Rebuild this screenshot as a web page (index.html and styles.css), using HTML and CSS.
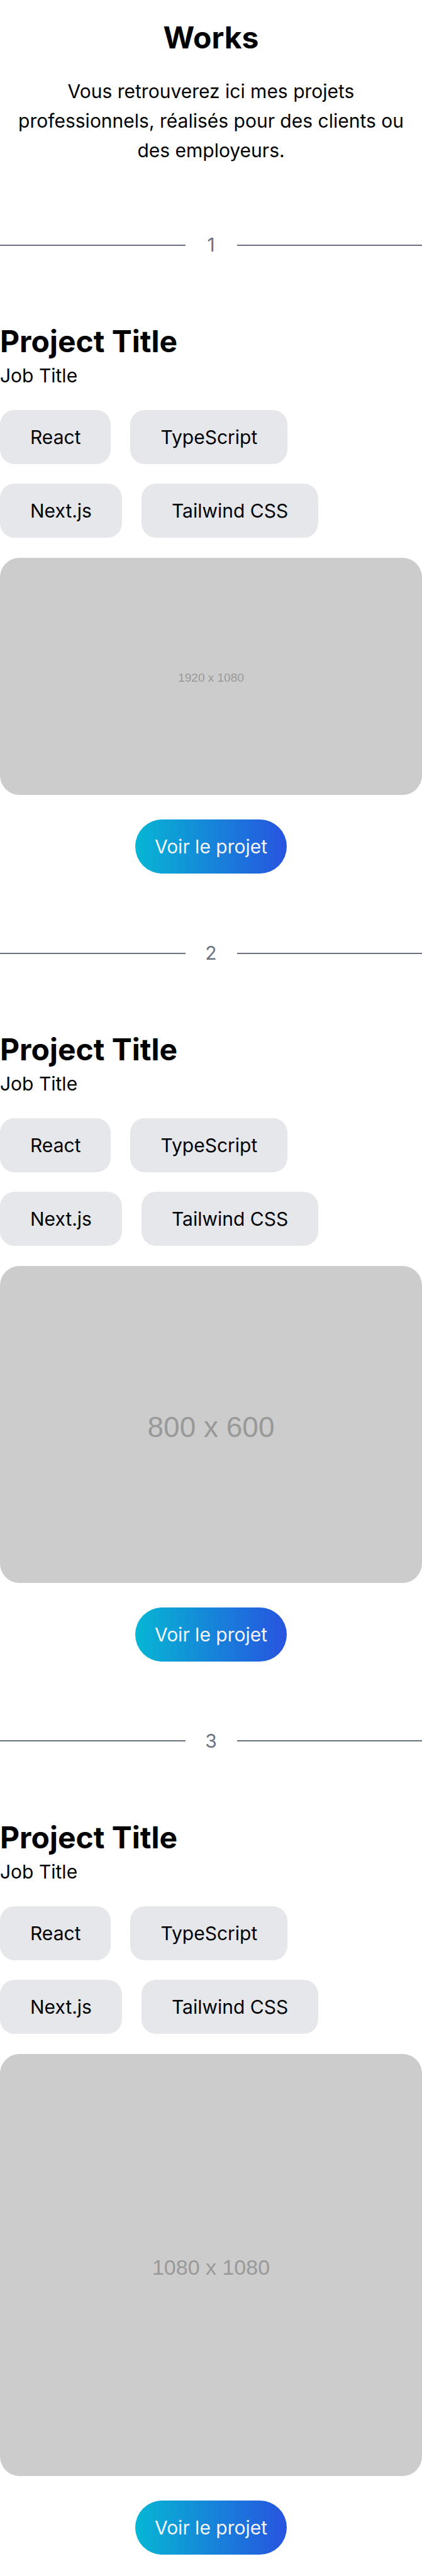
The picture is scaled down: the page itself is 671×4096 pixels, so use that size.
FILE: index.html
```html
<!DOCTYPE html>
<html lang="fr">
<head>
  <meta charset="utf-8">
  <meta name="viewport" content="width=device-width, initial-scale=1">
  <title>Works</title>
  <link rel="stylesheet" href="styles.css">
</head>
<body>
  <main class="works">
    <header class="intro">
      <h1 class="heading">Works</h1>
      <p class="lead">Vous retrouverez ici mes projets professionnels, réalisés pour des clients ou des employeurs.</p>
    </header>

    <section class="work">
      <div class="divider"><span class="number">1</span></div>
      <h2 class="heading">Project Title</h2>
      <p class="job">Job Title</p>
      <ul class="tags">
        <li class="tag">React</li>
        <li class="tag">TypeScript</li>
        <li class="tag">Next.js</li>
        <li class="tag">Tailwind CSS</li>
      </ul>
      <div class="preview preview-wide">1920 x 1080</div>
      <a class="button" href="#">Voir le projet</a>
    </section>

    <section class="work">
      <div class="divider"><span class="number">2</span></div>
      <h2 class="heading">Project Title</h2>
      <p class="job">Job Title</p>
      <ul class="tags">
        <li class="tag">React</li>
        <li class="tag">TypeScript</li>
        <li class="tag">Next.js</li>
        <li class="tag">Tailwind CSS</li>
      </ul>
      <div class="preview preview-classic">800 x 600</div>
      <a class="button" href="#">Voir le projet</a>
    </section>

    <section class="work">
      <div class="divider"><span class="number">3</span></div>
      <h2 class="heading">Project Title</h2>
      <p class="job">Job Title</p>
      <ul class="tags">
        <li class="tag">React</li>
        <li class="tag">TypeScript</li>
        <li class="tag">Next.js</li>
        <li class="tag">Tailwind CSS</li>
      </ul>
      <div class="preview preview-square">1080 x 1080</div>
      <a class="button" href="#">Voir le projet</a>
    </section>
  </main>
</body>
</html>
```

FILE: styles.css
```css
* {
  box-sizing: border-box;
  margin: 0;
  padding: 0;
}

body {
  background: #fff;
  color: #000;
  font-family: Inter, "Liberation Sans", sans-serif;
  font-size: 30px;
  font-weight: 400;
  line-height: 47px;
}

.works {
  display: flex;
  flex-direction: column;
  gap: 103px;
  padding: 28px 0 33px;
}

.intro {
  display: flex;
  flex-direction: column;
  gap: 31px;
  text-align: center;
}

.heading {
  font-size: 48px;
  font-weight: 700;
  line-height: 63px;
}

.work {
  display: flex;
  flex-direction: column;
}

.divider {
  display: flex;
  align-items: center;
  gap: 31px;
  margin-bottom: 98px;
  color: #6b7280;
}

.divider::before,
.divider::after {
  content: "";
  flex: 1;
  height: 2px;
  background: #6b7280;
}

.number {
  min-width: 20px;
  text-align: center;
}

.tags {
  display: flex;
  flex-wrap: wrap;
  gap: 31px;
  max-width: 530px;
  margin: 31px 0 32px;
  list-style: none;
}

.tag {
  padding: 20px 48px 19px;
  border-radius: 23px;
  background: #e5e7eb;
}

.preview {
  display: flex;
  align-items: center;
  justify-content: center;
  padding-top: 8px;
  border-radius: 31px;
  background: #ccc;
  color: #999;
  font-family: "Liberation Sans", Arial, sans-serif;
}

.preview-wide {
  padding-top: 4px;
  aspect-ratio: 16 / 9;
  font-size: 19px;
}

.preview-classic {
  aspect-ratio: 4 / 3;
  font-size: 46px;
}

.preview-square {
  aspect-ratio: 1;
  font-size: 34px;
}

.button {
  align-self: center;
  margin-top: 39px;
  padding: 20px 31px 19px;
  border-radius: 43px;
  background: linear-gradient(to right, #06b6d4, #2754df);
  color: #f3f4f6;
  text-decoration: none;
}
```
